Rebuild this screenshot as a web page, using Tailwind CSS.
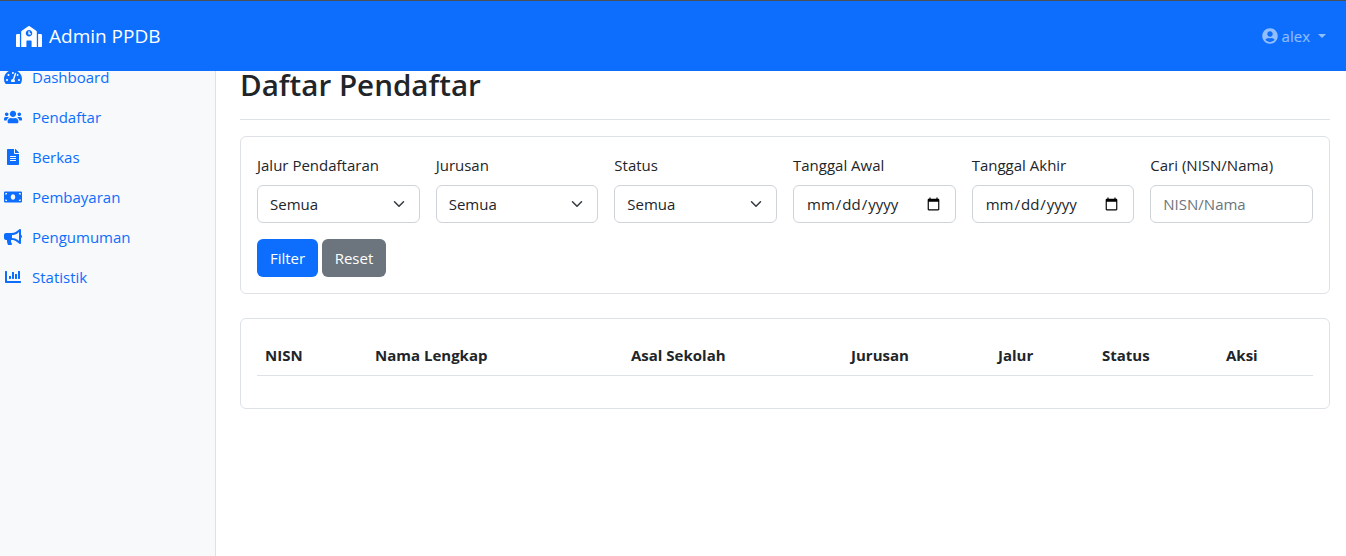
<!DOCTYPE html>
<html lang="en">
<head>
  <meta charset="UTF-8">
  <title>Daftar Pendaftar</title>
  <script src="https://cdn.jsdelivr.net/npm/@tailwindcss/browser@4"></script>
</head>
<body class="h-[556px] overflow-hidden bg-white font-['Open_Sans',sans-serif] text-[15px] text-[#212529]">
  <!-- Navbar -->
  <header class="relative z-10 flex h-[71px] items-center justify-between border-t border-[#495057] bg-[#0d6efd] pl-4 pr-5">
    <a href="#" class="flex items-center gap-[7px] text-[19px] text-white">
      <svg class="h-[21px] w-[26px]" viewBox="0 0 640 512" fill="currentColor"><path d="M0 224v272c0 8.84 7.16 16 16 16h80V192H32c-17.67 0-32 14.33-32 32zm360-48h-24v-40c0-4.42-3.58-8-8-8h-16c-4.42 0-8 3.58-8 8v64c0 4.42 3.58 8 8 8h48c4.42 0 8-3.58 8-8v-16c0-4.42-3.58-8-8-8zm137.75-63.96l-160-106.67a32.02 32.02 0 0 0-35.5 0l-160 106.67A32.002 32.002 0 0 0 128 138.66V512h128V368c0-8.84 7.16-16 16-16h96c8.84 0 16 7.16 16 16v144h128V138.67c0-10.7-5.35-20.7-14.25-26.63zM320 256c-44.18 0-80-35.82-80-80s35.82-80 80-80 80 35.82 80 80-35.82 80-80 80zm288-64h-64v320h80c8.84 0 16-7.16 16-16V224c0-17.67-14.33-32-32-32z"/></svg>
      Admin PPDB
    </a>
    <a href="#" class="flex items-center text-white/55">
      <svg class="mr-1 h-4 w-4" viewBox="0 0 496 512" fill="currentColor"><path d="M248 8C111 8 0 119 0 256s111 248 248 248 248-111 248-248S385 8 248 8zm0 96c48.6 0 88 39.4 88 88s-39.4 88-88 88-88-39.4-88-88 39.4-88 88-88zm0 344c-58.7 0-111.3-26.6-146.5-68.2 18.8-35.4 55.6-59.8 98.5-59.8 2.4 0 4.8.4 7.1 1.1 13 4.2 26.6 6.9 40.9 6.9 14.3 0 28-2.7 40.9-6.9 2.3-.7 4.7-1.1 7.1-1.1 42.9 0 79.7 24.4 98.5 59.8C359.3 421.4 306.7 448 248 448z"/></svg>
      alex
      <span class="ml-2 border-x-4 border-t-4 border-x-transparent border-t-current"></span>
    </a>
  </header>

  <div class="flex h-[485px]">
    <!-- Sidebar -->
    <nav class="w-[216px] shrink-0 border-r border-[#dee2e6] bg-[#f8f9fa] text-[#0d6efd]">
      <ul class="-mt-[14px]">
        <li class="flex h-10 items-center"><span class="flex w-[32px] justify-center pl-[4px] pr-[10px]"><svg class="h-[16px] w-[18px]" viewBox="0 0 576 512" fill="currentColor"><path d="M288 32C128.94 32 0 160.94 0 320c0 52.8 14.25 102.26 39.06 144.8 5.61 9.62 16.3 15.2 27.44 15.2h443c11.14 0 21.83-5.58 27.44-15.2C561.75 422.26 576 372.8 576 320c0-159.06-128.94-288-288-288zm0 64c14.71 0 26.58 10.13 30.32 23.65-1.11 2.26-2.64 4.23-3.45 6.67l-9.22 27.67c-5.13 3.49-10.97 6.01-17.64 6.01-17.67 0-32-14.33-32-32S270.33 96 288 96zM96 384c-17.67 0-32-14.33-32-32s14.33-32 32-32 32 14.33 32 32-14.33 32-32 32zm48-160c-17.67 0-32-14.33-32-32s14.33-32 32-32 32 14.33 32 32-14.33 32-32 32zm246.77-72.41l-61.33 184C343.13 347.33 352 364.54 352 384c0 11.72-3.38 22.55-8.88 32H232.88c-5.5-9.45-8.88-20.28-8.88-32 0-33.94 26.5-61.43 59.9-63.59l61.34-184.01c4.17-12.56 17.73-19.45 30.36-15.17 12.57 4.19 19.35 17.79 15.17 30.36zm14.66 57.2l15.52-46.55c3.47-1.29 7.13-2.23 11.05-2.23 17.67 0 32 14.33 32 32s-14.33 32-32 32c-11.38-.01-20.89-6.28-26.57-15.22zM480 384c-17.67 0-32-14.33-32-32s14.33-32 32-32 32 14.33 32 32-14.33 32-32 32z"/></svg></span>Dashboard</li>
        <li class="flex h-10 items-center"><span class="flex w-[32px] justify-center pl-[4px] pr-[10px]"><svg class="h-[16px] w-[20px]" viewBox="0 0 640 512" fill="currentColor"><path d="M96 224c35.3 0 64-28.7 64-64s-28.7-64-64-64-64 28.7-64 64 28.7 64 64 64zm448 0c35.3 0 64-28.7 64-64s-28.7-64-64-64-64 28.7-64 64 28.7 64 64 64zm32 32h-64c-17.6 0-33.5 7.1-45.1 18.6 40.3 22.1 68.9 62 75.1 109.4h66c17.7 0 32-14.3 32-32v-32c0-35.3-28.7-64-64-64zm-256 0c61.9 0 112-50.1 112-112S381.9 32 320 32 208 82.1 208 144s50.1 112 112 112zm76.8 32h-8.3c-20.8 10-43.9 16-68.5 16s-47.6-6-68.5-16h-8.3C179.6 288 128 339.6 128 403.2V432c0 26.5 21.5 48 48 48h288c26.5 0 48-21.5 48-48v-28.8c0-63.6-51.6-115.2-115.2-115.2zm-223.7-13.4C161.5 263.1 145.6 256 128 256H64c-35.3 0-64 28.7-64 64v32c0 17.7 14.3 32 32 32h65.9c6.3-47.4 34.9-87.3 75.2-109.4z"/></svg></span>Pendaftar</li>
        <li class="flex h-10 items-center"><span class="flex w-[32px] justify-center pl-[4px] pr-[10px]"><svg class="h-[16px] w-[12px]" viewBox="0 0 384 512" fill="currentColor"><path d="M224 136V0H24C10.7 0 0 10.7 0 24v464c0 13.3 10.7 24 24 24h336c13.3 0 24-10.7 24-24V160H248c-13.2 0-24-10.8-24-24zm64 236c0 6.6-5.4 12-12 12H108c-6.6 0-12-5.4-12-12v-8c0-6.6 5.4-12 12-12h168c6.6 0 12 5.4 12 12v8zm0-64c0 6.6-5.4 12-12 12H108c-6.6 0-12-5.4-12-12v-8c0-6.6 5.4-12 12-12h168c6.6 0 12 5.4 12 12v8zm0-72v8c0 6.6-5.4 12-12 12H108c-6.6 0-12-5.4-12-12v-8c0-6.6 5.4-12 12-12h168c6.6 0 12 5.4 12 12zm96-114.1v6.1H256V0h6.1c6.4 0 12.5 2.5 17 7l97.9 98c4.5 4.5 7 10.6 7 16.9z"/></svg></span>Berkas</li>
        <li class="flex h-10 items-center"><span class="flex w-[32px] justify-center pl-[4px] pr-[10px]"><svg class="h-[16px] w-[20px]" viewBox="0 0 640 512" fill="currentColor"><path d="M608 64H32C14.33 64 0 78.33 0 96v320c0 17.67 14.33 32 32 32h576c17.67 0 32-14.33 32-32V96c0-17.67-14.33-32-32-32zM48 400v-64c35.35 0 64 28.65 64 64H48zm0-224v-64h64c0 35.35-28.65 64-64 64zm272 176c-44.19 0-80-42.99-80-96 0-53.02 35.82-96 80-96s80 42.98 80 96c0 53.03-35.83 96-80 96zm272 48h-64c0-35.35 28.65-64 64-64v64zm0-224c-35.35 0-64-28.65-64-64h64v64z"/></svg></span>Pembayaran</li>
        <li class="flex h-10 items-center"><span class="flex w-[32px] justify-center pl-[4px] pr-[10px]"><svg class="h-[16px] w-[18px]" viewBox="0 0 576 512" fill="currentColor"><path d="M576 240c0-23.63-12.95-44.04-32-55.12V32.01C544 23.26 537.02 0 512 0c-7.12 0-14.19 2.38-19.98 7.02l-85.03 68.03C364.28 109.19 310.66 128 256 128H64c-35.35 0-64 28.65-64 64v96c0 35.35 28.65 64 64 64h33.7c-1.39 10.48-2.18 21.14-2.18 32 0 39.77 9.26 77.35 25.56 110.94 5.19 10.69 16.52 17.06 28.4 17.06h74.28c26.05 0 41.69-29.84 25.9-50.56-16.4-21.52-26.15-48.36-26.15-77.44 0-11.11 1.62-21.79 4.41-32H256c54.66 0 108.28 18.81 150.98 52.95l85.03 68.03a32.023 32.023 0 0 0 19.98 7.02c24.92 0 32-22.78 32-32V295.13C563.05 284.04 576 263.63 576 240zm-96 141.42l-33.05-26.44C392.95 311.78 325.12 288 256 288v-96c69.12 0 136.95-23.78 190.95-66.98L480 98.58v282.84z"/></svg></span>Pengumuman</li>
        <li class="flex h-10 items-center"><span class="flex w-[32px] justify-center pl-[4px] pr-[10px]"><svg class="h-[16px] w-[16px]" viewBox="0 0 512 512" fill="currentColor"><path d="M332.8 320h38.4c6.4 0 12.8-6.4 12.8-12.8V172.8c0-6.4-6.4-12.8-12.8-12.8h-38.4c-6.4 0-12.8 6.4-12.8 12.8v134.4c0 6.4 6.4 12.8 12.8 12.8zm96 0h38.4c6.4 0 12.8-6.4 12.8-12.8V76.8c0-6.4-6.4-12.8-12.8-12.8h-38.4c-6.4 0-12.8 6.4-12.8 12.8v230.4c0 6.4 6.4 12.8 12.8 12.8zm-288 0h38.4c6.4 0 12.8-6.4 12.8-12.8v-70.4c0-6.4-6.4-12.8-12.8-12.8h-38.4c-6.4 0-12.8 6.4-12.8 12.8v70.4c0 6.4 6.4 12.8 12.8 12.8zm96 0h38.4c6.4 0 12.8-6.4 12.8-12.8V108.8c0-6.4-6.4-12.8-12.8-12.8h-38.4c-6.4 0-12.8 6.4-12.8 12.8v198.4c0 6.4 6.4 12.8 12.8 12.8zM496 384H64V80c0-8.84-7.16-16-16-16H16C7.16 64 0 71.16 0 80v336c0 17.67 14.33 32 32 32h464c8.84 0 16-7.16 16-16v-32c0-8.84-7.16-16-16-16z"/></svg></span>Statistik</li>
      </ul>
    </nav>

    <!-- Main -->
    <main class="min-w-0 flex-1 pl-6 pr-4">
      <h1 class="-mt-[7px] flex h-[56px] items-center border-b border-[#dee2e6] pb-3 text-[29.6px] font-semibold">Daftar Pendaftar</h1>

      <section class="mt-4 rounded-[6px] border border-[#dee2e6] p-4">
        <div class="grid grid-cols-6 gap-4">
          <div>
            <label class="mb-2 block h-6 leading-6">Jalur Pendaftaran</label>
            <div class="relative">
              <select class="h-[38px] w-full appearance-none rounded-[6px] border border-[#ced4da] bg-white pl-3 pr-9"><option>Semua</option></select>
              <svg class="pointer-events-none absolute right-[15px] top-[13px] h-3 w-3" viewBox="0 0 16 16" fill="none" stroke="#343a40" stroke-width="2" stroke-linecap="round" stroke-linejoin="round"><path d="m2 5 6 6 6-6"/></svg>
            </div>
          </div>
          <div>
            <label class="mb-2 block h-6 leading-6">Jurusan</label>
            <div class="relative">
              <select class="h-[38px] w-full appearance-none rounded-[6px] border border-[#ced4da] bg-white pl-3 pr-9"><option>Semua</option></select>
              <svg class="pointer-events-none absolute right-[15px] top-[13px] h-3 w-3" viewBox="0 0 16 16" fill="none" stroke="#343a40" stroke-width="2" stroke-linecap="round" stroke-linejoin="round"><path d="m2 5 6 6 6-6"/></svg>
            </div>
          </div>
          <div>
            <label class="mb-2 block h-6 leading-6">Status</label>
            <div class="relative">
              <select class="h-[38px] w-full appearance-none rounded-[6px] border border-[#ced4da] bg-white pl-3 pr-9"><option>Semua</option></select>
              <svg class="pointer-events-none absolute right-[15px] top-[13px] h-3 w-3" viewBox="0 0 16 16" fill="none" stroke="#343a40" stroke-width="2" stroke-linecap="round" stroke-linejoin="round"><path d="m2 5 6 6 6-6"/></svg>
            </div>
          </div>
          <div>
            <label class="mb-2 block h-6 leading-6">Tanggal Awal</label>
            <input type="date" class="h-[38px] w-full rounded-[6px] border border-[#ced4da] bg-white px-3">
          </div>
          <div>
            <label class="mb-2 block h-6 leading-6">Tanggal Akhir</label>
            <input type="date" class="h-[38px] w-full rounded-[6px] border border-[#ced4da] bg-white px-3">
          </div>
          <div>
            <label class="mb-2 block h-6 leading-6">Cari (NISN/Nama)</label>
            <input type="text" placeholder="NISN/Nama" class="h-[38px] w-full rounded-[6px] border border-[#ced4da] bg-white px-3 placeholder:text-[#6c757d]">
          </div>
        </div>
        <div class="mt-4 flex gap-1">
          <button class="h-[38px] w-[61px] rounded-[6px] bg-[#0d6efd] text-white">Filter</button>
          <button class="h-[38px] w-[64px] rounded-[6px] bg-[#6c757d] text-white">Reset</button>
        </div>
      </section>

      <section class="mt-6 h-[91px] rounded-[6px] border border-[#dee2e6] px-4 pt-4">
        <table class="w-full table-fixed text-left">
          <thead>
            <tr class="h-[40px] border-b border-[#dee2e6] font-bold">
              <th class="w-[110px] px-2">NISN</th>
              <th class="w-[256px] px-2">Nama Lengkap</th>
              <th class="w-[220px] px-2">Asal Sekolah</th>
              <th class="w-[147px] px-2">Jurusan</th>
              <th class="w-[104px] px-2">Jalur</th>
              <th class="w-[124px] px-2">Status</th>
              <th class="px-2">Aksi</th>
            </tr>
          </thead>
        </table>
      </section>
    </main>
  </div>
</body>
</html>
